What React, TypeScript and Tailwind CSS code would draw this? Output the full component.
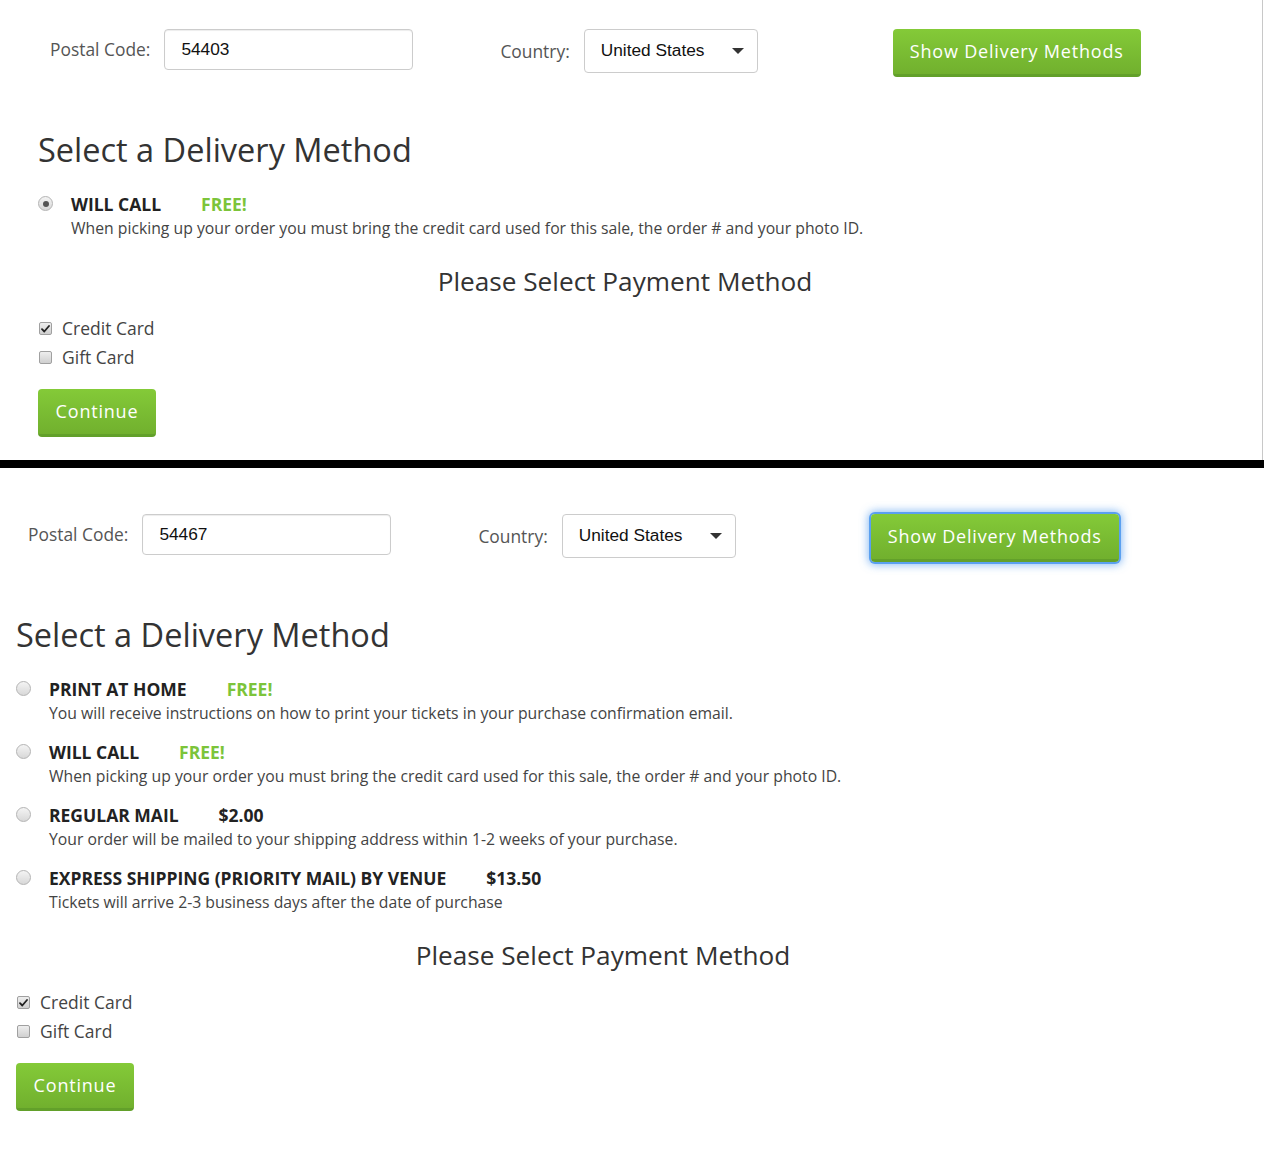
import React from "react";

type Method = { name: string; price: string; free?: boolean; desc: string };

const willCall: Method = {
  name: "WILL CALL",
  price: "FREE!",
  free: true,
  desc: "When picking up your order you must bring the credit card used for this sale, the order # and your photo ID.",
};

const allMethods: Method[] = [
  {
    name: "PRINT AT HOME",
    price: "FREE!",
    free: true,
    desc: "You will receive instructions on how to print your tickets in your purchase confirmation email.",
  },
  willCall,
  {
    name: "REGULAR MAIL",
    price: "$2.00",
    desc: "Your order will be mailed to your shipping address within 1-2 weeks of your purchase.",
  },
  {
    name: "EXPRESS SHIPPING (PRIORITY MAIL) BY VENUE",
    price: "$13.50",
    desc: "Tickets will arrive 2-3 business days after the date of purchase",
  },
];

function Radio({ checked }: { checked?: boolean }) {
  return (
    <span className="mt-[4px] flex h-[15px] w-[15px] flex-shrink-0 items-center justify-center rounded-full border border-[#b4b4b4] bg-gradient-to-b from-[#f4f4f4] to-[#d8d8d8]">
      {checked && <span className="h-[6px] w-[6px] rounded-full bg-[#555]" />}
    </span>
  );
}

function Checkbox({ checked }: { checked?: boolean }) {
  return (
    <span className="flex h-[13px] w-[13px] flex-shrink-0 items-center justify-center rounded-[2px] border border-[#a0a0a0] bg-gradient-to-b from-[#eeeeee] to-[#d0d0d0]">
      {checked && (
        <svg width="9" height="8" viewBox="0 0 9 8" fill="none">
          <path d="M1 4.2l2.3 2.3L8 1" stroke="#222" strokeWidth="1.8" strokeLinecap="round" strokeLinejoin="round" />
        </svg>
      )}
    </span>
  );
}

function GreenButton({ label, width, focused }: { label: string; width: string; focused?: boolean }) {
  return (
    <button
      className={`${width} h-[48px] rounded-[4px] border-b-[3px] border-[#62a02a] bg-gradient-to-b from-[#84ca38] to-[#71b02e] text-[18px] tracking-[0.8px] text-white ${
        focused ? "shadow-[0_0_0_2px_#5aa0f0,0_0_8px_3px_rgba(90,160,240,0.7)]" : ""
      }`}
    >
      {label}
    </button>
  );
}

function DeliveryForm({
  postal,
  methods,
  selected,
  focused,
  padLeft,
  padTop,
}: {
  postal: string;
  methods: Method[];
  selected?: string;
  focused?: boolean;
  padLeft: string;
  padTop: string;
}) {
  return (
    <div className={`${padLeft} ${padTop} font-['Open_Sans',sans-serif] text-[#333]`}>
      <div className="flex items-start pl-[12px]">
        <span className="mr-[14px] leading-[40px] text-[17.4px] text-[#555]">Postal Code:</span>
        <div className="flex h-[41px] w-[249px] items-center rounded-[4px] border border-[#ccc] pl-[16px] font-['Liberation_Sans',Arial,sans-serif] text-[17.3px] text-[#111] shadow-[inset_0_1px_1px_rgba(0,0,0,0.075)]">
          {postal}
        </div>
        <span className="ml-[87px] mr-[14px] leading-[44px] text-[17.4px] text-[#555]">Country:</span>
        <div className="flex h-[44px] w-[174px] items-center justify-between rounded-[4px] border border-[#ccc] pl-[16px] pr-[13px] font-['Liberation_Sans',Arial,sans-serif] text-[17.3px] text-[#111]">
          <span>United States</span>
          <svg width="12" height="6" viewBox="0 0 12 6">
            <path d="M0 0h12L6 6z" fill="#333" />
          </svg>
        </div>
        <div className="ml-[135px]">
          <GreenButton label="Show Delivery Methods" width="w-[248px]" focused={focused} />
        </div>
      </div>

      <h2 className="mt-[53px] text-[32.5px] leading-[40px] text-[#333]">Select a Delivery Method</h2>

      <div className="mt-[22px] flex flex-col gap-[15px]">
        {methods.map((m) => (
          <div key={m.name} className="flex items-start gap-[18px]">
            <Radio checked={selected === m.name} />
            <div>
              <div className="flex text-[17.5px] font-bold leading-[24px]">
                <span className="text-[#222]">{m.name}</span>
                <span className={`ml-[40px] ${m.free ? "text-[#7cc43a]" : "text-[#222]"}`}>{m.price}</span>
              </div>
              <p className="text-[15.75px] leading-[24px] text-[#444]">{m.desc}</p>
            </div>
          </div>
        ))}
      </div>

      <h3 className="mt-[23px] w-[1174px] text-center text-[26.2px] leading-[36px] text-[#333]">
        Please Select Payment Method
      </h3>

      <div className="mt-[15px] flex flex-col">
        <label className="flex h-[29px] items-center gap-[10px] pl-[1px] text-[17.5px] text-[#444]">
          <Checkbox checked />
          Credit Card
        </label>
        <label className="flex h-[29px] items-center gap-[10px] pl-[1px] text-[17.5px] text-[#444]">
          <Checkbox />
          Gift Card
        </label>
      </div>

      <div className="mt-[17px]">
        <GreenButton label="Continue" width="w-[118px]" />
      </div>
    </div>
  );
}

export default function App() {
  return (
    <div className="min-h-[1149px] w-[1264px] bg-white">
      <div className="h-[460px] w-[1263px] border-r border-[#c8c8c8]">
        <DeliveryForm postal="54403" methods={[willCall]} selected="WILL CALL" padLeft="pl-[38px]" padTop="pt-[29px]" />
      </div>
      <div className="h-[8px] w-full bg-black" />
      <DeliveryForm postal="54467" methods={allMethods} focused padLeft="pl-[16px]" padTop="pt-[46px]" />
    </div>
  );
}
